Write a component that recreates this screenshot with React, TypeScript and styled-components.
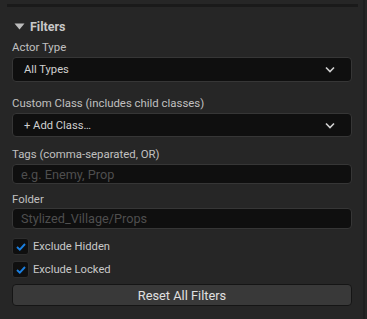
import React from "react";
import styled, { createGlobalStyle } from "styled-components";

const Global = createGlobalStyle`
  html, body { margin: 0; padding: 0; background: #262626; }
  body { font-family: Roboto, "Noto Sans", sans-serif; }
`;

const Panel = styled.div`
  width: 365px;
  height: 319px;
  box-sizing: border-box;
  background: #262626;
  border-right: 2px solid #1f1f1f;
  padding: 4px 6px 0 12px;
  display: flex;
  flex-direction: column;
`;

const TopBar = styled.div`
  height: 3px;
  margin: 0 0 0 -5px;
  width: 351px;
  background: #1a1a1a;
`;

const Header = styled.div`
  display: flex;
  align-items: center;
  gap: 5px;
  margin-top: 12px;
  height: 14px;
  padding-left: 2px;
  color: #c8c8c8;
  font-weight: 700;
  font-size: 12.5px;
`;

const Body = styled.div`
  display: flex;
  flex-direction: column;
  width: 340px;
`;

const Label = styled.div<{ $mt: number }>`
  margin-top: ${(p) => p.$mt}px;
  color: #c0c0c0;
  font-size: 11.4px;
  line-height: 14px;
  height: 14px;
  white-space: nowrap;
`;

const Field = styled.div<{ $h: number; $mt: number }>`
  box-sizing: border-box;
  height: ${(p) => p.$h}px;
  margin-top: ${(p) => p.$mt}px;
  background: #0f0f0f;
  border: 1px solid #363636;
  border-radius: 4px;
  display: flex;
  align-items: center;
  justify-content: space-between;
  padding: 0 16px 0 11px;
  font-size: 11.2px;
  color: #d0d0d0;
  white-space: nowrap;
`;

const Placeholder = styled.span`
  color: #4e4e4e;
  font-size: 12.7px;
  margin-left: -3px;
`;

const CheckRow = styled.div<{ $mt: number }>`
  display: flex;
  align-items: center;
  gap: 4px;
  margin-top: ${(p) => p.$mt}px;
  height: 17px;
  color: #c8c8c8;
  font-size: 11.2px;
`;

const Box = styled.div`
  box-sizing: border-box;
  width: 17px;
  height: 17px;
  background: #0f0f0f;
  border: 1px solid #2e2e2e;
  border-radius: 3px;
  display: flex;
  align-items: center;
  justify-content: center;
`;

const Button = styled.div`
  box-sizing: border-box;
  margin-top: 6px;
  height: 22px;
  background: #393939;
  border: 1px solid #151515;
  border-radius: 4px;
  display: flex;
  align-items: center;
  justify-content: center;
  color: #e0e0e0;
  font-size: 12.8px;
`;

const Chevron = () => (
  <svg width="10" height="7" viewBox="0 0 10 7">
    <path d="M1 1.5 L5 5.5 L9 1.5" stroke="#d0d0d0" strokeWidth="1.6" fill="none" />
  </svg>
);

const Triangle = () => (
  <svg width="11" height="7" viewBox="0 0 11 7">
    <path d="M0.5 0.5 L10.5 0.5 L5.5 6.5 Z" fill="#bdbdbd" />
  </svg>
);

const Check = () => (
  <svg width="10" height="8" viewBox="0 0 10 8">
    <path d="M1 4 L3.8 6.6 L9 1" stroke="#1a7fe0" strokeWidth="1.9" fill="none" />
  </svg>
);

export default function App() {
  return (
    <>
      <Global />
      <Panel>
        <TopBar />
        <Header>
          <Triangle />
          Filters
        </Header>
        <Body>
          <Label $mt={7}>Actor Type</Label>
          <Field $h={25} $mt={3}>
            All Types
            <Chevron />
          </Field>
          <Label $mt={14}>Custom Class (includes child classes)</Label>
          <Field $h={24} $mt={3}>
            + Add Class…
            <Chevron />
          </Field>
          <Label $mt={10}>Tags (comma-separated, OR)</Label>
          <Field $h={20} $mt={3}>
            <Placeholder>e.g. Enemy, Prop</Placeholder>
          </Field>
          <Label $mt={8}>Folder</Label>
          <Field $h={21} $mt={2}>
            <Placeholder>Stylized_Village/Props</Placeholder>
          </Field>
          <CheckRow $mt={9}>
            <Box><Check /></Box>
            Exclude Hidden
          </CheckRow>
          <CheckRow $mt={6}>
            <Box><Check /></Box>
            Exclude Locked
          </CheckRow>
          <Button>Reset All Filters</Button>
        </Body>
      </Panel>
    </>
  );
}
